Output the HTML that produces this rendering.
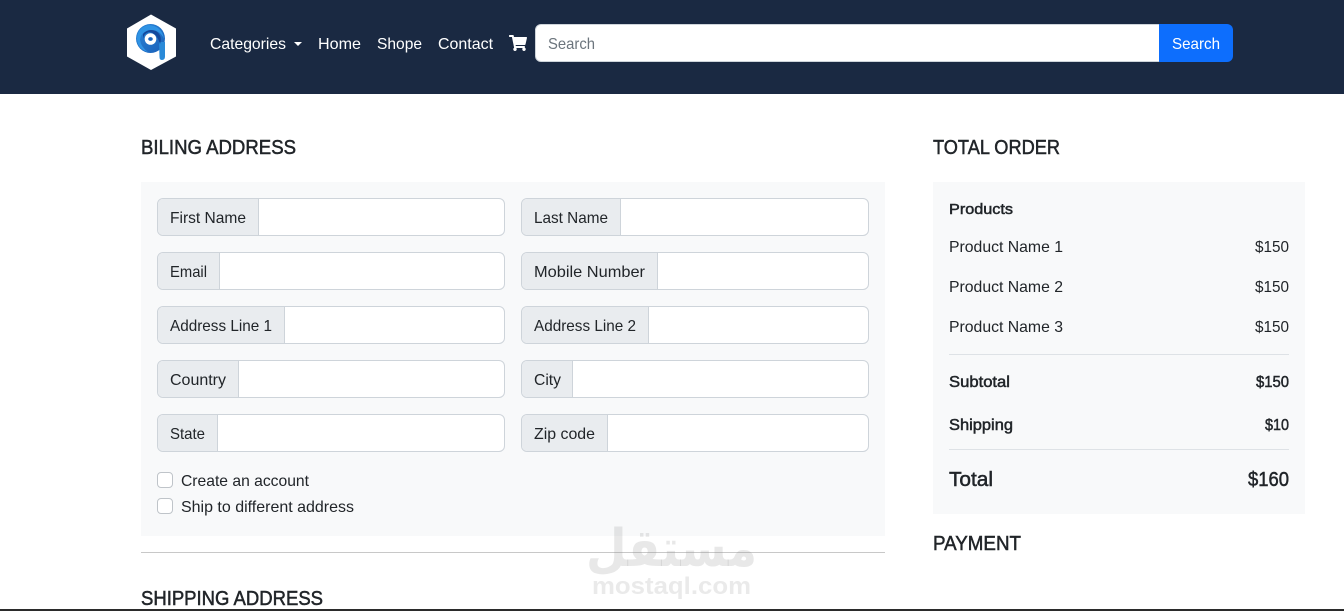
<!DOCTYPE html>
<html lang="en"><head><meta charset="utf-8"><title>Checkout</title>
<style>
html,body{margin:0;padding:0;width:1344px;height:611px;overflow:hidden;background:#fff}
body{position:relative;font-family:"Liberation Sans",sans-serif;color:#212529}
.a{position:absolute;box-sizing:border-box}
.nav{left:0;top:0;width:1344px;height:94px;background:#1a2942}
.panel{background:#f8f9fa}
.ig{display:block;background:#fff;border:1px solid #ced4da;border-radius:6px;height:38px;width:348px;overflow:hidden}
.ig i{display:block;box-sizing:border-box;height:36px;background:#e9ecef;border-right:1px solid #ced4da}
.cb{width:16px;height:16px;background:#fff;border:1px solid #bfc4c9;border-radius:4px}
svg.o{position:absolute;left:0;top:0}
svg text{font-family:"Liberation Sans",sans-serif;font-size:16px;fill:#212529}
.m{stroke:#212529;stroke-width:.5px}
.w{fill:#fff;stroke:none}
</style></head><body>
<div class="a nav"></div>
<div class="a" style="left:535px;top:24px;width:625px;height:38px;background:#fff;border:1px solid #ced4da;border-radius:6px 0 0 6px"></div>
<div class="a" style="left:1159px;top:24px;width:74px;height:38px;background:#0d6efd;border-radius:0 6px 6px 0"></div>

<div class="a panel" style="left:141px;top:182px;width:744px;height:354px"></div>
<div class="a panel" style="left:933px;top:182px;width:372px;height:332px"></div>

<div class="a ig" style="left:157px;top:198px"><i style="width:101px"></i></div>
<div class="a ig" style="left:521px;top:198px"><i style="width:99px"></i></div>
<div class="a ig" style="left:157px;top:252px"><i style="width:62px"></i></div>
<div class="a ig" style="left:521px;top:252px"><i style="width:136px"></i></div>
<div class="a ig" style="left:157px;top:306px"><i style="width:127px"></i></div>
<div class="a ig" style="left:521px;top:306px"><i style="width:127px"></i></div>
<div class="a ig" style="left:157px;top:360px"><i style="width:81px"></i></div>
<div class="a ig" style="left:521px;top:360px"><i style="width:51px"></i></div>
<div class="a ig" style="left:157px;top:414px"><i style="width:60px"></i></div>
<div class="a ig" style="left:521px;top:414px"><i style="width:86px"></i></div>
<div class="a cb" style="left:157px;top:472px"></div>
<div class="a cb" style="left:157px;top:498px"></div>

<div class="a" style="left:141px;top:552px;width:744px;height:1px;background:#c8c8c8"></div>
<div class="a" style="left:949px;top:354px;width:340px;height:1px;background:#dee2e6"></div>
<div class="a" style="left:949px;top:449px;width:340px;height:1px;background:#dee2e6"></div>
<div class="a" style="left:0;top:609px;width:1344px;height:2px;background:#2b2b2b"></div>

<svg class="o" width="1344" height="611" viewBox="0 0 1344 611" xmlns="http://www.w3.org/2000/svg">
<defs><linearGradient id="g" x1="0" y1="0" x2="1" y2="1"><stop offset="0" stop-color="#2a86d8"/><stop offset="1" stop-color="#1a5fb8"/></linearGradient></defs>
<!-- logo -->
<path d="M151 14.500L176 28.500V56.500L151 70L127 56.500V28.500Z" fill="#fff"/>
<circle cx="150.500" cy="38.500" r="14.500" fill="url(#g)"/>
<path d="M159 42H165V56.500Q165 60 162 60Q159.500 60 159.500 57Z" fill="#2a8ad8"/>
<path d="M137 38Q138 27 149 25Q162 26 164 39Q160 30 151 30Q141 31 140 40Q141 47 148 52Q137 49 137 38Z" fill="#2f93e4"/>
<path d="M143 34Q148 28 156 31Q163 36 160 44Q157 33 149 32Q144 33 143 39Z" fill="#14489c"/>
<circle cx="150.500" cy="39" r="5.800" fill="#fff"/>
<ellipse cx="150.500" cy="39" rx="2.300" ry="1.900" fill="#1a63bd"/>
<!-- nav -->
<text class="w" x="210" y="49" textLength="76" lengthAdjust="spacingAndGlyphs">Categories</text>
<path d="M294 42h8l-4 4z" fill="#fff"/>
<text class="w" x="318" y="49" textLength="43" lengthAdjust="spacingAndGlyphs">Home</text>
<text class="w" x="377" y="49" textLength="45" lengthAdjust="spacingAndGlyphs">Shope</text>
<text class="w" x="438" y="49" textLength="55" lengthAdjust="spacingAndGlyphs">Contact</text>
<svg x="509" y="35" width="18" height="16" viewBox="0 0 576 512"><path fill="#fff" d="M528.120 301.319l47.273-208C578.806 78.301 567.391 64 551.990 64H159.208l-9.166-44.810C147.758 8.021 137.930 0 126.529 0H24C10.745 0 0 10.745 0 24v16c0 13.255 10.745 24 24 24h69.883l70.248 343.435C147.325 417.100 136 435.222 136 456c0 30.928 25.072 56 56 56s56-25.072 56-56c0-15.674-6.447-29.835-16.824-40h209.647C430.447 426.165 424 440.326 424 456c0 30.928 25.072 56 56 56s56-25.072 56-56c0-22.172-12.888-41.332-31.579-50.405l5.517-24.276c3.413-15.018-8.002-29.319-23.403-29.319H218.117l-6.545-32h293.145c11.206 0 20.920-7.754 23.403-18.681z"/></svg>
<text x="548" y="49" textLength="47" lengthAdjust="spacingAndGlyphs" style="fill:#6c757d">Search</text>
<text class="w" x="1172" y="49" textLength="48" lengthAdjust="spacingAndGlyphs">Search</text>
<!-- headings -->
<text class="m" x="141" y="154" textLength="155" lengthAdjust="spacingAndGlyphs" style="font-size:20px">BILING ADDRESS</text>
<text class="m" x="933" y="154" textLength="127" lengthAdjust="spacingAndGlyphs" style="font-size:20px">TOTAL ORDER</text>
<text class="m" x="933" y="550" textLength="88" lengthAdjust="spacingAndGlyphs" style="font-size:20px">PAYMENT</text>
<text class="m" x="141" y="605" textLength="182" lengthAdjust="spacingAndGlyphs" style="font-size:20px">SHIPPING ADDRESS</text>
<!-- labels -->
<text x="170" y="223" textLength="76" lengthAdjust="spacingAndGlyphs">First Name</text>
<text x="534" y="223" textLength="74" lengthAdjust="spacingAndGlyphs">Last Name</text>
<text x="170" y="277" textLength="37" lengthAdjust="spacingAndGlyphs">Email</text>
<text x="534" y="277" textLength="111" lengthAdjust="spacingAndGlyphs">Mobile Number</text>
<text x="170" y="331" textLength="102" lengthAdjust="spacingAndGlyphs">Address Line 1</text>
<text x="534" y="331" textLength="102" lengthAdjust="spacingAndGlyphs">Address Line 2</text>
<text x="170" y="385" textLength="56" lengthAdjust="spacingAndGlyphs">Country</text>
<text x="534" y="385" textLength="27" lengthAdjust="spacingAndGlyphs">City</text>
<text x="170" y="439" textLength="35" lengthAdjust="spacingAndGlyphs">State</text>
<text x="534" y="439" textLength="61" lengthAdjust="spacingAndGlyphs">Zip code</text>
<text x="181" y="486" textLength="128" lengthAdjust="spacingAndGlyphs">Create an account</text>
<text x="181" y="512" textLength="173" lengthAdjust="spacingAndGlyphs">Ship to different address</text>
<!-- order -->
<text class="m" x="949" y="214" textLength="64" lengthAdjust="spacingAndGlyphs" style="font-size:15px">Products</text>
<text x="949" y="252" textLength="114" lengthAdjust="spacingAndGlyphs">Product Name 1</text>
<text x="1255" y="252" textLength="34" lengthAdjust="spacingAndGlyphs">$150</text>
<text x="949" y="292" textLength="114" lengthAdjust="spacingAndGlyphs">Product Name 2</text>
<text x="1255" y="292" textLength="34" lengthAdjust="spacingAndGlyphs">$150</text>
<text x="949" y="332" textLength="114" lengthAdjust="spacingAndGlyphs">Product Name 3</text>
<text x="1255" y="332" textLength="34" lengthAdjust="spacingAndGlyphs">$150</text>
<text class="m" x="949" y="387" textLength="61" lengthAdjust="spacingAndGlyphs">Subtotal</text>
<text class="m" x="1256" y="387" textLength="33" lengthAdjust="spacingAndGlyphs">$150</text>
<text class="m" x="949" y="430" textLength="64" lengthAdjust="spacingAndGlyphs">Shipping</text>
<text class="m" x="1265" y="430" textLength="24" lengthAdjust="spacingAndGlyphs">$10</text>
<text class="m" x="949" y="486" textLength="44" lengthAdjust="spacingAndGlyphs" style="font-size:20px">Total</text>
<text class="m" x="1248" y="486" textLength="41" lengthAdjust="spacingAndGlyphs" style="font-size:20px">$160</text>
<!-- watermark -->
<text transform="translate(671.500 566) scale(.9 1)" text-anchor="middle" direction="rtl" style="font-family:'DejaVu Sans',sans-serif;font-weight:bold;font-size:52px;fill:#8a8a8a;fill-opacity:.2">مستقل</text>
<text x="592" y="594" textLength="159" lengthAdjust="spacingAndGlyphs" style="font-weight:bold;font-size:24px;fill:#8a8a8a;fill-opacity:.18">mostaql.com</text>
</svg>
</body></html>
